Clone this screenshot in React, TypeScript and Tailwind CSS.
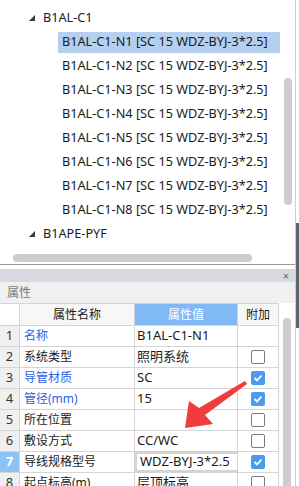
import React from "react";

const FONT = { fontFamily: '"Noto Sans", "Noto Sans CJK SC", sans-serif' };

function Tri() {
  return (
    <svg width="6" height="6" viewBox="0 0 6 6" className="shrink-0">
      <polygon points="6,0 6,6 0,6" fill="#3a3a3a" />
    </svg>
  );
}

function Check({ on }: { on: boolean }) {
  if (on)
    return (
      <div className="w-[14px] h-[14px] rounded-[2px] bg-[#4d9bef] flex items-center justify-center">
        <svg width="10" height="10" viewBox="0 0 10 10">
          <polyline points="1.5,5 4,7.5 8.5,2.5" fill="none" stroke="white" strokeWidth="1.8" />
        </svg>
      </div>
    );
  return <div className="w-[14px] h-[14px] rounded-[2px] border border-[#7a7a7a] bg-white" />;
}

const treeChildren = ["N1", "N2", "N3", "N4", "N5", "N6", "N7", "N8"];

const rows: { n: number; name: string; blue?: boolean; val: string; cb: null | boolean; edit?: boolean }[] = [
  { n: 1, name: "名称", blue: true, val: "B1AL-C1-N1", cb: null },
  { n: 2, name: "系统类型", val: "照明系统", cb: false },
  { n: 3, name: "导管材质", blue: true, val: "SC", cb: true },
  { n: 4, name: "管径(mm)", blue: true, val: "15", cb: true },
  { n: 5, name: "所在位置", val: "", cb: false },
  { n: 6, name: "敷设方式", val: "CC/WC", cb: false },
  { n: 7, name: "导线规格型号", val: "WDZ-BYJ-3*2.5", cb: true, edit: true },
  { n: 8, name: "起点标高(m)", val: "层顶标高", cb: false },
];

export default function App() {
  return (
    <div className="w-[299px] h-[486px] bg-white relative overflow-hidden flex text-[#1a1a1a]" style={FONT}>
      <div className="w-[295px] flex flex-col shrink-0">
        {/* tree panel */}
        <div className="h-[265px] relative border-b border-[#9a9a9a] shrink-0">
          <div className="pt-[6px] text-[12.7px]">
            <div className="h-[24px] flex items-center pl-[29px]">
              <Tri />
              <span className="ml-[8px]">B1AL-C1</span>
            </div>
            {treeChildren.map((c, i) => (
              <div key={c} className="h-[24px] flex items-center pl-[58px]">
                <div
                  className={
                    "h-[21px] w-[222px] flex items-center pl-[4px] whitespace-nowrap " +
                    (i === 0 ? "bg-[#b4cff0]" : "")
                  }
                >
                  B1AL-C1-{c} [SC 15 WDZ-BYJ-3*2.5]
                </div>
              </div>
            ))}
            <div className="h-[24px] flex items-center pl-[29px]">
              <Tri />
              <span className="ml-[8px]">B1APE-PYF</span>
            </div>
          </div>
          {/* vertical scrollbar */}
          <div className="absolute left-[284px] top-[78px] w-[8px] h-[127px] rounded-full bg-[#cdcdcd]" />
          {/* horizontal scrollbar */}
          <div className="absolute left-[13px] top-[254px] w-[239px] h-[8px] rounded-full bg-[#cdcdcd]" />
        </div>
        <div className="h-[4px] bg-white shrink-0" />
        {/* property panel title */}
        <div className="h-[13px] bg-[#d6d9dd] flex items-center justify-end pr-[6px] shrink-0">
          <span className="text-[11px] leading-none text-[#666]">×</span>
        </div>
        <div className="h-[21px] bg-[#f0f0f0] flex items-center pl-[7px] text-[12px] text-[#7a7a7a] shrink-0">
          属性
        </div>
        {/* table */}
        <div className="flex flex-1 min-h-0">
          <div className="w-[279px] shrink-0 border-t border-[#d4d4d4]">
            <div className="flex h-[22px] border-b border-[#d4d4d4] text-[12px]">
              <div className="w-[20px] border-r border-[#d4d4d4] bg-white" />
              <div className="w-[115px] border-r border-[#d4d4d4] bg-[#f7f7f7] flex items-center justify-center">
                属性名称
              </div>
              <div className="w-[103px] border-r border-[#d4d4d4] bg-[#80b9f6] text-white flex items-center justify-center">
                属性值
              </div>
              <div className="w-[41px] border-r border-[#d4d4d4] bg-[#f7f7f7] flex items-center justify-center">
                附加
              </div>
            </div>
            {rows.map((r) => (
              <div key={r.n} className="flex h-[21px] border-b border-[#d4d4d4]">
                <div
                  className={
                    "w-[20px] border-r border-[#d4d4d4] flex items-center justify-center text-[13px] " +
                    (r.edit ? "bg-[#8fc3f7] text-white font-bold" : "bg-[#f0f0f0] text-[#333]")
                  }
                >
                  {r.n}
                </div>
                <div
                  className={
                    "w-[115px] border-r border-[#d4d4d4] flex items-center pl-[4px] text-[12px] " +
                    (r.blue ? "text-[#2f5fe3]" : "")
                  }
                >
                  {r.name}
                </div>
                <div
                  className={
                    "w-[103px] border-r border-[#d4d4d4] flex items-center text-[13px] whitespace-nowrap " +
                    (r.edit ? "border-2 border-[#6e6e6e] pl-[3px]" : "pl-[2px]")
                  }
                >
                  {r.val}
                </div>
                <div className="w-[41px] border-r border-[#d4d4d4] flex items-center justify-center">
                  {r.cb !== null && <Check on={r.cb} />}
                </div>
              </div>
            ))}
          </div>
          <div className="flex-1 relative bg-white">
            <div className="absolute left-[4px] top-[15px] w-[8px] h-[200px] rounded-full bg-[#cdcdcd]" />
          </div>
        </div>
      </div>
      {/* right edge strip */}
      <div className="w-[4px] flex flex-col border-l border-[#d0d0d0]">
        <div className="h-[223px] bg-white" />
        <div className="h-[105px] bg-[#5c636b]" />
        <div className="flex-1 bg-white" />
      </div>
      {/* red arrow */}
      <svg className="absolute left-0 top-0 pointer-events-none" width="299" height="486">
        <polygon
          points="185,428 189,401 199,408 245,381 247,384 205,415 213,424"
          fill="#f03c3c"
        />
      </svg>
    </div>
  );
}
